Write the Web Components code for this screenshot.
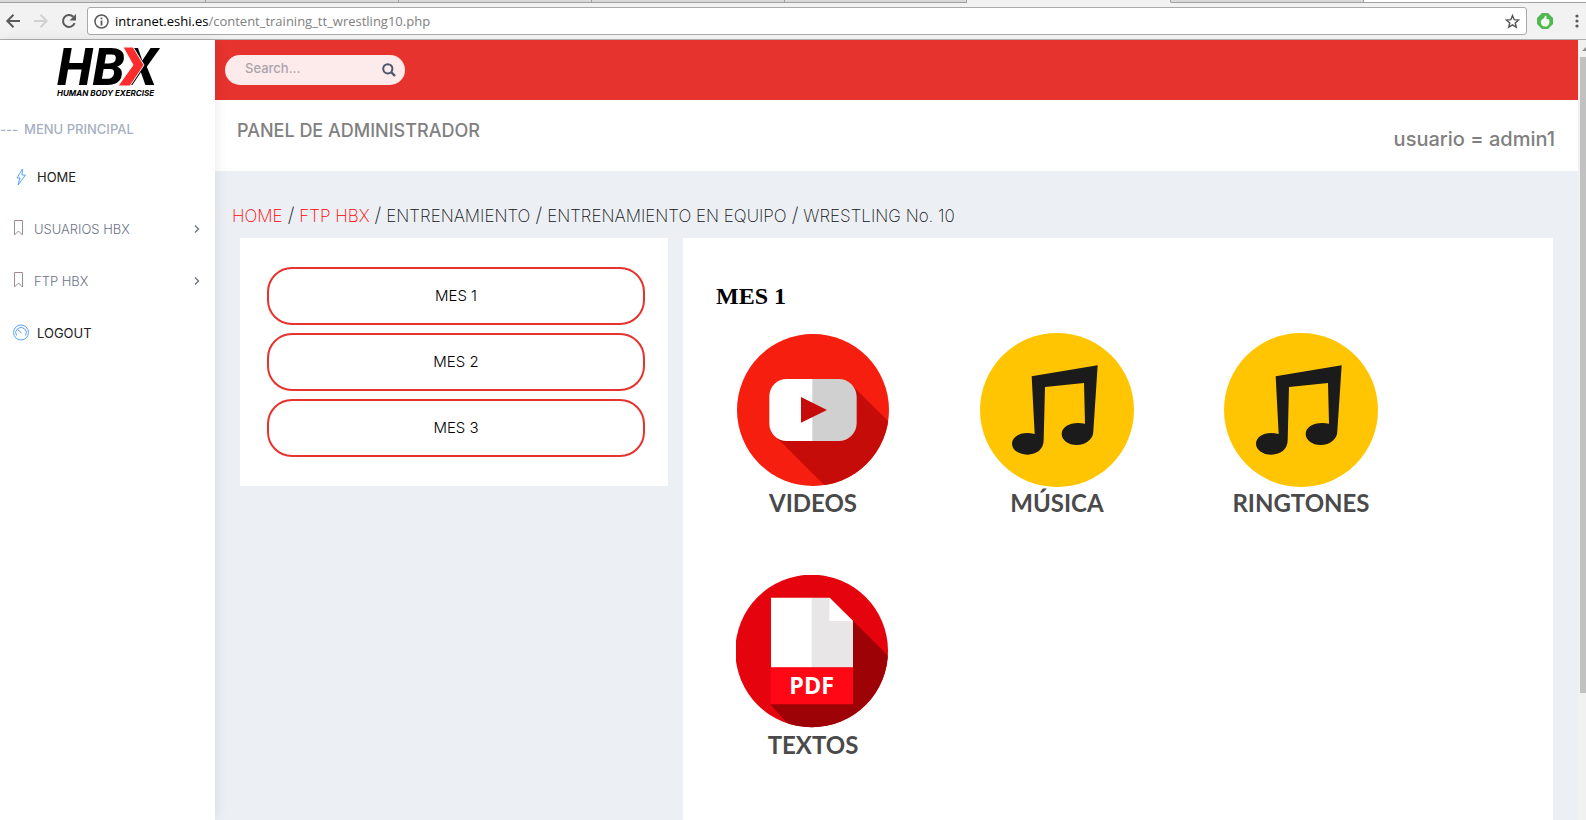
<!DOCTYPE html>
<html lang="es">
<head>
<meta charset="utf-8">
<title>HBX - Panel de administrador</title>
<style>
html, body { margin: 0; height: 100%; }
body { font-family: Inter, "Noto Sans", sans-serif; background: #fff; }
</style>
</head>
<body>
<hbx-window></hbx-window>
<script>
function define(name, html) {
  const tpl = document.createElement('template');
  tpl.innerHTML = html;
  customElements.define(name, class extends HTMLElement {
    connectedCallback() {
      if (this.shadowRoot) return;
      this.attachShadow({ mode: 'open' }).append(tpl.content.cloneNode(true));
    }
  });
}

define('browser-tabs', `
<style>
:host { display: flex; height: 3px; overflow: hidden; background: #fff; box-sizing: border-box; }
i { flex: 0 0 193px; box-sizing: border-box; background: #d9d9d9; border-bottom: 1px solid #a0a0a0; border-right: 1px solid #a0a0a0; }
i.first { flex-basis: 206px; }
i.last { flex-basis: 182px; }
i.on { flex-basis: 204px; background: #f2f2f2; border-bottom-color: #f2f2f2; }
b { flex: 1; border-bottom: 1px solid #a0a0a0; box-sizing: border-box; }
</style>
<i class="first"></i><i></i><i></i><i></i><i class="last"></i><i class="on"></i><i></i><b></b>`);

define('browser-bar', `
<style>
:host { display: flex; align-items: center; height: 37px; box-sizing: border-box; padding: 0 6px 0 5px; background: #f2f2f2; border-bottom: 1px solid #adadad; overflow: hidden; }
button { border: 0; padding: 0; background: none; display: flex; }
nav { display: flex; gap: 12px; margin-right: 10px; }
.url { flex: 1; display: flex; align-items: center; gap: 6px; box-sizing: border-box; height: 28px; padding: 0 6px; background: #fff; border: 1px solid #a9a9a9; border-radius: 3px; }
.text { flex: 1; font: 13px/20px "Open Sans", "Noto Sans", sans-serif; color: #808080; outline: 0; white-space: nowrap; }
.text span { color: #000; }
.ext { margin: 0 21px 0 10px; }
</style>
<nav>
<button aria-label="Atrás"><svg width="16" height="16" viewBox="0 0 16 16" fill="none" stroke="#5a5a5a" stroke-width="2"><path d="M15 8H2.5M8.5 1.8 2.3 8l6.2 6.2"/></svg></button>
<button aria-label="Adelante"><svg width="16" height="16" viewBox="0 0 16 16" fill="none" stroke="#d0d0d0" stroke-width="2"><path d="M1 8h12.500M7.500 1.800 13.700 8l-6.200 6.200"/></svg></button>
<button aria-label="Recargar"><svg width="16" height="16" viewBox="0 0 16 16"><path d="M13.600 10.200A6 6 0 1 1 12.300 3.800" fill="none" stroke="#5a5a5a" stroke-width="2"/><path d="M15 1v6.500H8.500z" fill="#5a5a5a"/></svg></button>
</nav>
<div class="url">
<svg width="15" height="15" viewBox="0 0 15 15"><circle cx="7.500" cy="7.500" r="6.500" fill="none" stroke="#5a5a5a" stroke-width="1.500"/><path d="M6.600 6.500h1.800V11.500H6.600zM6.600 3.500h1.800v1.800H6.600z" fill="#5a5a5a"/></svg>
<div class="text" role="textbox" contenteditable="true" spellcheck="false" aria-label="Dirección"><span>intranet.eshi.es</span>/content_training_tt_wrestling10.php</div>
<button aria-label="Favorito"><svg width="15" height="15" viewBox="0 0 15 15"><path d="M7.500 1.600 9.200 5.700l4.500.3-3.500 2.900 1.100 4.400-3.800-2.400-3.800 2.400 1.100-4.400L1.300 6l4.500-.3z" fill="none" stroke="#555" stroke-width="1.400"/></svg></button>
</div>
<button class="ext" aria-label="Extensión"><svg width="16" height="16" viewBox="0 0 16 16"><path d="M5 0h6l5 5v6l-5 5H5l-5-5V5z" fill="#4fb84e"/><path d="M8.500 2.500c1.500.3 1 2 .8 3.200 2 .1 3.200.6 3.200 2.500 0 3-1.300 5.300-4.300 5.300S3.800 11.400 3.800 9c0-2.200 1.500-2.700 2.700-3.600C7.500 4.700 7.600 3.500 8.500 2.500z" fill="#f4f8f2"/></svg></button>
<button aria-label="Menú"><svg width="6" height="16" viewBox="0 0 6 16" fill="#5a5a5a"><circle cx="3" cy="3" r="1.600"/><circle cx="3" cy="8" r="1.600"/><circle cx="3" cy="13" r="1.600"/></svg></button>`);

define('hbx-logo', `
<style>:host { display: block; } svg { display: block; margin: 0 auto; overflow: visible; }</style>
<svg width="111" height="56" viewBox="0 0 111 56" role="img" aria-label="HBX Human Body Exercise">
<text x="5" y="42" font-family="Roboto" font-weight="800" font-style="italic" font-size="52" fill="#000">HBX</text>
<path d="M71 4h10l11 18-14 21H66l15-21z" fill="#fb2c2b" stroke="#fff" stroke-width="1"/>
<text x="5" y="53" font-family="Inter" font-weight="700" font-style="italic" font-size="8" fill="#000">HUMAN BODY EXERCISE</text>
</svg>`);

define('menu-item', `
<style>
:host { display: block; }
a { display: flex; align-items: center; height: 52px; padding: 0 14px 0 12px; color: #6b7386; font-size: 13px; font-weight: 300; text-decoration: none; }
slot[name=icon] { display: block; }
.t { flex: 1; }
:host([strong]) a { color: #222; font-weight: 400; }
svg { display: none; }
:host([more]) svg { display: block; }
</style>
<a href="#"><slot name="icon"></slot><span class="t"><slot></slot></span><svg width="8" height="10" viewBox="0 0 8 10"><path d="M2 1.500 5.500 5 2 8.500" fill="none" stroke="#6b7386" stroke-width="1.400"/></svg></a>`);

define('side-bar', `
<style>
:host { display: block; background: #fff; box-shadow: 1px 0 12px rgba(0,0,0,.09); position: relative; z-index: 1; padding-top: 3px; }
h2 { display: flex; gap: 6px; margin: 20px 0 12px; font-size: 13px; line-height: 20px; font-weight: 500; color: #a6afbf; white-space: nowrap; }
menu-item svg { display: block; margin-right: 8px; }
menu-item[more] svg { margin-right: 10px; }
</style>
<hbx-logo></hbx-logo>
<h2><span>---</span><span>MENU PRINCIPAL</span></h2>
<menu-item strong><svg slot="icon" width="17" height="18" viewBox="0 0 17 18"><path d="M10.500 1 5 10h3l-2 7 7.500-10H10z" fill="none" stroke="#5aa2f0"/></svg>HOME</menu-item>
<menu-item more><svg slot="icon" width="12" height="18" viewBox="0 0 12 18"><path d="M2.500 .5h8v14.500l-4-4-4 4z" fill="none" stroke="#a08a94"/></svg>USUARIOS HBX</menu-item>
<menu-item more><svg slot="icon" width="12" height="18" viewBox="0 0 12 18"><path d="M2.500 .5h8v14.500l-4-4-4 4z" fill="none" stroke="#a08a94"/></svg>FTP HBX</menu-item>
<menu-item strong><svg slot="icon" width="17" height="18" viewBox="0 0 17 18"><g fill="none" stroke="#5aa2f0"><circle cx="9" cy="8.500" r="7.500"/><path d="M4.500 11.500a5.300 5.300 0 1 1 9 0M6 6l3.500 3"/></g></svg>LOGOUT</menu-item>`);

define('top-bar', `
<style>
:host { display: flex; align-items: center; height: 60px; padding-left: 10px; background: #e6332e; }
form { display: flex; align-items: center; box-sizing: border-box; width: 180px; height: 30px; padding: 0 9px 0 20px; border-radius: 15px; background: #fdeaea; }
input { flex: 1; min-width: 0; padding: 0 0 4px; border: 0; outline: 0; background: none; font: 500 13px/18px Inter, sans-serif; color: #555; }
input::placeholder { color: #aaa5ac; opacity: 1; }
button { border: 0; padding: 0; background: none; display: flex; }
</style>
<form><input type="text" placeholder="Search..." aria-label="Search"><button type="button" aria-label="Buscar"><svg width="14" height="14" viewBox="0 0 14 14" fill="none" stroke="#4c566e"><circle cx="5.800" cy="5.800" r="4.600" stroke-width="2"/><path d="m9 9 4 4" stroke-width="2.400"/></svg></button></form>`);

define('title-bar', `
<style>
:host { display: flex; justify-content: space-between; box-sizing: border-box; height: 71px; padding: 18px 23px 0 22px; background: #fff; color: #808080; }
h1 { margin: 0; font-size: 18px; line-height: 26px; font-weight: 500; }
p { margin: 8px 0 0; font-size: 20px; line-height: 26px; font-weight: 500; }
</style>
<h1>PANEL DE ADMINISTRADOR</h1><p>usuario = admin1</p>`);

define('bread-crumbs', `
<style>
:host { display: block; padding: 32px 18px 9px 17px; font-size: 17px; line-height: 26px; font-weight: 200; color: #111; white-space: nowrap; }
a { color: #f00; text-decoration: none; }
i { font-style: normal; margin: 0 5px; font-size: 20px; line-height: 20px; }
</style>
<a href="#">HOME</a><i>/</i><a href="#">FTP HBX</a><i>/</i>ENTRENAMIENTO<i>/</i>ENTRENAMIENTO EN EQUIPO<i>/</i>WRESTLING No. 10`);

define('month-list', `
<style>
:host { display: flex; flex-direction: column; gap: 8px; padding: 29px 23px 29px 27px; background: #fff; }
button { height: 58px; border: 2px solid #e6332e; border-radius: 25px; background: #fff; font: 300 15px/24px Inter, sans-serif; color: #000; padding: 0; }
</style>
<button>MES 1</button><button>MES 2</button><button>MES 3</button>`);

define('media-tile', `
<style>
:host { display: block; }
a { display: flex; flex-direction: column; align-items: center; text-decoration: none; color: #4a4a4a; font: 700 24px/32px Lato, sans-serif; }
</style>
<a href="#"><slot name="icon"></slot><slot></slot></a>`);

const note = `<svg slot="icon" width="154" height="154" viewBox="0 0 462 462"><circle cx="231" cy="231" r="231" fill="#ffc502"/><path d="M155 130 353 97 340 295c0 24-22 41-50 41-26 0-45-15-45-33 0-24 32-39 70-31L312 150l-117 12-4 160c0 26-20 43-49 43-26 0-46-15-46-33 0-24 32-39 68-29z" fill="#1b1b1b"/></svg>`;

define('media-panel', `
<style>
:host { display: block; background: #fff; padding: 43px 8px 0; }
h2 { margin: 0 0 22px 25px; font: 700 24px/30px "Liberation Serif", serif; color: #000; }
.grid { display: grid; grid-template-columns: repeat(auto-fill, 244px); grid-auto-rows: 242px; }
media-tile svg { display: block; }
</style>
<h2>MES 1</h2>
<div class="grid">
<media-tile><svg slot="icon" width="154" height="154" viewBox="0 0 462 462"><defs><clipPath id="v"><circle cx="231" cy="231" r="228"/></clipPath></defs><circle cx="231" cy="231" r="228" fill="#f61e0f"/><g clip-path="url(#v)"><path d="M350 158 500 308V500H309L120 312z" fill="#c60c08"/></g><path d="M231 138h-79a52 52 0 0 0-52 52v82a52 52 0 0 0 52 52h79z" fill="#fff"/><path d="M229 138h79a54 54 0 0 1 54 54v78a54 54 0 0 1-54 54h-79z" fill="#d0d0d0"/><path d="M195 192 273 231 195 269z" fill="#c60c08"/></svg>VIDEOS</media-tile>
<media-tile>${note}MÚSICA</media-tile>
<media-tile>${note}RINGTONES</media-tile>
<media-tile><svg slot="icon" width="154" height="154" viewBox="4 3 462 462"><defs><clipPath id="p"><circle cx="231" cy="231" r="229"/></clipPath></defs><circle cx="231" cy="231" r="229" fill="#e5040d"/><g clip-path="url(#p)"><path d="M355 140 500 285V500H206L108 392z" fill="#9d0206"/></g><path d="M109 71H232V281H109z" fill="#fff"/><path d="M231 71h54l70 70v140H231z" fill="#e8e6e7"/><path d="M284 71v70h71z" fill="#fff"/><path d="M108 280h247v111H108z" fill="#ff0714"/><text x="231" y="359" text-anchor="middle" font-family="Open Sans" font-weight="700" font-size="70" fill="#fff">PDF</text></svg>TEXTOS</media-tile>
</div>`);

define('scroll-bar', `
<style>
:host { display: block; background: #f1f1f1; overflow: hidden; }
svg { display: block; margin: 0 0 0 4px; height: 17px; }
div { height: 636px; margin-left: 2px; background: #c1c1c1; }
</style>
<svg width="8" height="17" viewBox="0 0 8 17"><path d="M0 11 4 7l4 4z" fill="#8b8b8b"/></svg><div></div>`);

define('hbx-window', `
<style>
:host { display: flex; flex-direction: column; height: 100vh; overflow: hidden; }
.page { flex: 1; min-height: 0; display: grid; grid-template-columns: 215px 1fr 8px; }
main { display: flex; flex-direction: column; min-width: 0; background: #ecf0f5; }
.cols { flex: 1; display: grid; grid-template-columns: 428fr 870fr; gap: 15px; padding: 0 25px; }
month-list { align-self: start; }
</style>
<browser-tabs></browser-tabs>
<browser-bar></browser-bar>
<div class="page">
<side-bar></side-bar>
<main>
<top-bar></top-bar>
<title-bar></title-bar>
<bread-crumbs></bread-crumbs>
<div class="cols"><month-list></month-list><media-panel></media-panel></div>
</main>
<scroll-bar></scroll-bar>
</div>`);
</script>
</body>
</html>
